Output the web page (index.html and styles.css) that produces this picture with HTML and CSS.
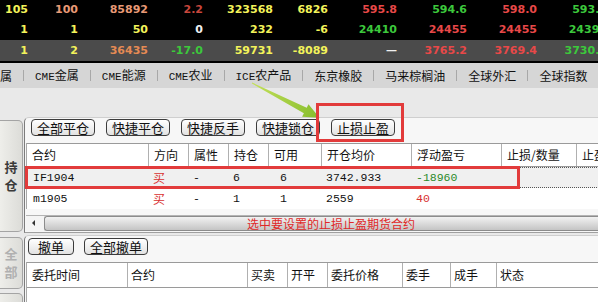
FILE: index.html
```html
<!DOCTYPE html>
<html>
	<head>
		<meta charset="UTF-8">
		<title>止损止盈</title>
		<link rel="stylesheet" href="styles.css">
	</head>
	<body>
		<div class="quotes">
			<div class="qrow">
				<span class="yel">105</span><span class="org">100</span><span class="org">85892</span><span class="dred">2.2</span><span class="yel">323568</span><span class="yel">6826</span><span class="red">595.8</span><span class="grn">594.6</span><span class="red">598.0</span><span class="grn">593.6</span>
			</div>
			<div class="qrow">
				<span class="yel">1</span><span class="yel">1</span><span class="yel">50</span><span class="wht">0</span><span class="yel">232</span><span class="yel">-6</span><span class="grn">24410</span><span class="red">24455</span><span class="red">24455</span><span class="grn">24390</span>
			</div>
			<div class="qrow cur">
				<span class="yel">1</span><span class="yel">2</span><span class="org2">36435</span><span class="grn">-17.0</span><span class="yel">59731</span><span class="yel">-8089</span><span class="wht">—</span><span class="red">3765.2</span><span class="red">3769.4</span><span class="grn">3730.2</span>
			</div>
		</div>
		<div class="tabbar">
			<span class="tab">属</span><i class="sep"></i>
			<span class="tab"><b class="lat">CME</b>金属</span><i class="sep"></i>
			<span class="tab"><b class="lat">CME</b>能源</span><i class="sep"></i>
			<span class="tab"><b class="lat">CME</b>农业</span><i class="sep"></i>
			<span class="tab"><b class="lat">ICE</b>农产品</span><i class="sep"></i>
			<span class="tab">东京橡胶</span><i class="sep"></i>
			<span class="tab">马来棕榈油</span><i class="sep"></i>
			<span class="tab">全球外汇</span><i class="sep"></i>
			<span class="tab">全球指数</span>
		</div>
		<div class="topgap"></div>
		<div class="section sec-pos">
			<div class="side">
				<div class="vtab on"><span>持</span><span>仓</span></div>
			</div>
			<div class="panel">
				<div class="toolbar">
					<button class="btn">全部平仓</button>
					<button class="btn">快捷平仓</button>
					<button class="btn">快捷反手</button>
					<button class="btn">快捷锁仓</button>
					<button class="btn">止损止盈</button>
				</div>
				<div class="grid pos">
					<div class="ghead">
						<div class="cell">合约</div>
						<div class="cell">方向</div>
						<div class="cell">属性</div>
						<div class="cell">持仓</div>
						<div class="cell">可用</div>
						<div class="cell">开仓均价</div>
						<div class="cell">浮动盈亏</div>
						<div class="cell">止损/数量</div>
						<div class="cell">止盈/数量</div>
					</div>
					<div class="grow sel">
						<div class="cell num">IF1904</div>
						<div class="cell buy">买</div>
						<div class="cell num">-</div>
						<div class="cell num">6</div>
						<div class="cell num avail">6</div>
						<div class="cell num">3742.933</div>
						<div class="cell num down">-18960</div>
						<div class="cell"></div>
						<div class="cell"></div>
					</div>
					<div class="grow">
						<div class="cell num">m1905</div>
						<div class="cell buy">买</div>
						<div class="cell num">-</div>
						<div class="cell num">1</div>
						<div class="cell num avail">1</div>
						<div class="cell num">2559</div>
						<div class="cell num up">40</div>
						<div class="cell"></div>
						<div class="cell"></div>
					</div>
				</div>
				<div class="hscroll">
					<span class="sarrow"></span>
					<span class="thumb"></span>
					<span class="tip">选中要设置的止损止盈期货合约</span>
				</div>
			</div>
		</div>
		<div class="section sec-ord">
			<div class="side">
				<div class="vtab"><span>全</span><span>部</span></div>
				<div class="vtab more"></div>
			</div>
			<div class="panel">
				<div class="toolbar tb2">
					<button class="btn wide">撤单</button>
					<button class="btn">全部撤单</button>
				</div>
				<div class="grid ord">
					<div class="ghead">
						<div class="cell">委托时间</div>
						<div class="cell">合约</div>
						<div class="cell">买卖</div>
						<div class="cell">开平</div>
						<div class="cell">委托价格</div>
						<div class="cell">委手</div>
						<div class="cell">成手</div>
						<div class="cell">状态</div>
					</div>
				</div>
			</div>
		</div>
		<svg class="marks" width="598" height="302" viewBox="0 0 598 302">
			<defs>
				<linearGradient id="arrowFill" x1="252" y1="83" x2="320" y2="118" gradientUnits="userSpaceOnUse">
					<stop offset="0" stop-color="#c4e05a"/>
					<stop offset="1" stop-color="#86bd2c"/>
				</linearGradient>
			</defs>
			<polygon points="252.2,82.6 306.7,107.8 308.5,104.3 319.5,117.8 302.1,116.7 303.9,113.2 251.8,83.4" fill="url(#arrowFill)"/>
			<rect x="317.5" y="104.5" width="85" height="36" fill="none" stroke="#e23b3b" stroke-width="3"/>
			<rect x="26.5" y="167.5" width="492" height="20" fill="none" stroke="#e23b3b" stroke-width="3"/>
		</svg>
	</body>
</html>
```

FILE: styles.css
```css
* {
	margin: 0;
	padding: 0;
	box-sizing: border-box;
}
body {
	position: relative;
	width: 598px;
	height: 302px;
	overflow: hidden;
	background: #e9e9e9;
	font-family: "Noto Sans CJK SC", sans-serif;
	font-size: 12px;
	color: #111;
}
/* 行情区 */
.quotes {
	background: #000;
	font-family: "DejaVu Sans", sans-serif;
	font-weight: bold;
	font-size: 11px;
}
.qrow {
	display: flex;
	height: 20px;
	line-height: 19px;
	white-space: nowrap;
	overflow: hidden;
}
.qrow.cur {
	height: 21px;
	line-height: 21px;
	background: #4b4b4b;
}
.qrow span {
	flex: none;
	width: 70px;
	text-align: right;
}
.qrow span:nth-child(1) { width: 28px; }
.qrow span:nth-child(2) { width: 50px; }
.qrow span:nth-child(4) { width: 55px; }
.qrow span:nth-child(6) { width: 55px; }
.qrow span:nth-child(7) { width: 69px; }
.yel { color: #f3f35a; }
.org { color: #e89a76; }
.org2 { color: #e58a54; }
.dred { color: #c8463c; }
.red { color: #e84848; }
.grn { color: #3cc83c; }
.wht { color: #f0f0f0; }
/* 市场标签 */
.tabbar {
	display: flex;
	align-items: center;
	gap: 11px;
	height: 27px;
	border-top: 2px solid #000;
	background: #d6d6d6;
	white-space: nowrap;
	overflow: hidden;
}
.tab {
	flex: none;
	line-height: 25px;
}
.lat {
	font-family: "Liberation Mono", monospace;
	font-size: 11px;
	font-weight: normal;
}
.sep {
	flex: none;
	width: 1px;
	height: 11px;
	background: #a8a8a8;
}
.topgap {
	height: 29px;
}
/* 持仓/委托 面板 */
.section {
	display: flex;
}
.sec-pos {
	height: 116px;
}
.sec-ord {
	margin-top: 2px;
	height: 67px;
}
.side {
	flex: none;
	width: 24px;
}
.vtab {
	display: flex;
	flex-direction: column;
	align-items: center;
	justify-content: center;
	width: 23px;
	margin-top: 3px;
	height: 112px;
	border: 1px solid #a4a4a4;
	border-left: none;
	border-radius: 0 5px 5px 0;
	background: linear-gradient(to right, #eeeeea, #dcdcd8);
	color: #b0b0b0;
	font-size: 13px;
	font-weight: bold;
	line-height: 18px;
}
.vtab.on {
	color: #3a3a3a;
}
.sec-ord .vtab {
	margin-top: 2px;
	height: 52px;
}
.sec-ord .vtab.more {
	margin-top: 4px;
	height: 20px;
}
.panel {
	flex: 1;
	padding-left: 1px;
	border-left: 1px solid #7c7c7c;
	border-top: 1px solid #cfcfcf;
	border-bottom: 1px solid #a0a0a0;
	border-top-left-radius: 5px;
	background: #f7f7f7;
}
.sec-ord .panel {
	border-bottom: none;
}
.toolbar {
	display: flex;
	gap: 11px;
	padding: 1px 0 0 5px;
}
.toolbar.tb2 {
	gap: 10px;
	padding: 2px 0 0 2px;
}
.btn {
	height: 17px;
	padding: 0 5px;
	border: 1px solid #3c3c3c;
	border-radius: 4px;
	background: linear-gradient(#ffffff, #e2e2e2);
	font-family: "Noto Sans CJK SC", sans-serif;
	font-size: 13px;
	line-height: 15px;
	color: #111;
}
.btn.wide {
	padding: 0 9px;
}
/* 表格 */
.grid {
	margin-top: 7px;
	border-left: 1px solid #a8a8a8;
	background: #fff;
}
.ghead, .grow {
	display: flex;
	white-space: nowrap;
	overflow: hidden;
}
.ghead {
	height: 24px;
	border-top: 1px solid #9a9a9a;
	border-bottom: 1px solid #9a9a9a;
	line-height: 22px;
}
.ghead .cell {
	border-right: 1px solid #b0b0b0;
}
.cell {
	flex: none;
	padding-left: 5px;
}
.grow {
	height: 21px;
	line-height: 21px;
}
.grow.sel {
	background: #f0f0f0;
	border-top: 1px dotted #555;
	border-bottom: 1px dotted #555;
	line-height: 19px;
}
.pos .cell:nth-child(1) { width: 122px; }
.pos .cell:nth-child(2) { width: 40px; }
.pos .cell:nth-child(3) { width: 40px; }
.pos .cell:nth-child(4) { width: 40px; }
.pos .cell:nth-child(5) { width: 53px; }
.pos .cell:nth-child(6) { width: 90px; }
.pos .cell:nth-child(7) { width: 90px; }
.pos .cell:nth-child(8) { width: 75px; }
.pos .cell:nth-child(9) { width: 80px; }
.grow .cell {
	padding-left: 4px;
}
.grow .cell:first-child {
	padding-left: 6px;
}
.grow .cell.avail {
	padding-left: 11px;
}
.num {
	font-family: "Liberation Mono", monospace;
	font-size: 11.5px;
}
.buy {
	color: #d83030;
}
.down {
	color: #2a8a2a;
}
.up {
	color: #d83030;
}
.ord {
	margin-top: 7px;
	height: 50px;
}
.ord .ghead {
	height: 26px;
	line-height: 24px;
}
.ord .cell {
	padding-left: 3px;
}
.ord .cell:first-child {
	padding-left: 5px;
}
.ord .cell:nth-child(1) { width: 101px; }
.ord .cell:nth-child(2) { width: 120px; }
.ord .cell:nth-child(3) { width: 40px; }
.ord .cell:nth-child(4) { width: 40px; }
.ord .cell:nth-child(5) { width: 75px; }
.ord .cell:nth-child(6) { width: 48px; }
.ord .cell:nth-child(7) { width: 46px; }
.ord .cell:nth-child(8) { width: 110px; border-right: none; }
/* 横向滚动条 */
.hscroll {
	position: relative;
	display: flex;
	align-items: center;
	height: 16px;
	margin-top: 6px;
	border-top: 1px solid #b4b4b4;
	background: #ececec;
}
.sarrow {
	flex: none;
	width: 18px;
	height: 100%;
	background: #f4f4f4;
	position: relative;
}
.sarrow::after {
	content: "";
	position: absolute;
	left: 6px;
	top: 4px;
	border-top: 3px solid transparent;
	border-bottom: 3px solid transparent;
	border-right: 3px solid #333;
}
.thumb {
	flex: 1;
	height: 100%;
	border: 1px solid #8c8c8c;
	border-right: none;
	border-radius: 3px 0 0 3px;
	background: linear-gradient(#f2f2f2, #c4c4c4);
}
.tip {
	position: absolute;
	left: 221px;
	top: 0;
	line-height: 15px;
	color: #e02828;
	white-space: nowrap;
}
.marks {
	position: absolute;
	left: 0;
	top: 0;
	pointer-events: none;
}
```
